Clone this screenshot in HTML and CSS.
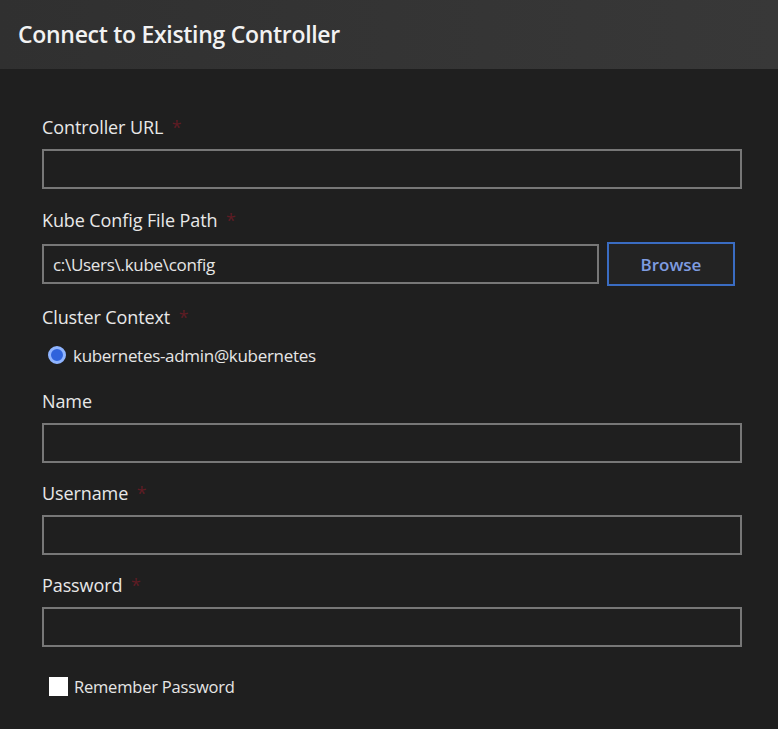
FILE: index.html
```html
<!DOCTYPE html>
<html lang="en">
<head>
<meta charset="utf-8">
<title>Connect to Existing Controller</title>
<link rel="stylesheet" href="styles.css">
</head>
<body>
<div class="dialog">
  <header class="dialog-header">
    <h1 class="dialog-title">Connect to Existing Controller</h1>
  </header>
  <main class="dialog-body">
    <div class="field">
      <label class="field-label">Controller URL <span class="req">*</span></label>
      <input class="text-input" type="text">
    </div>
    <div class="field">
      <label class="field-label">Kube Config File Path <span class="req">*</span></label>
      <div class="row">
        <input class="text-input path-input" type="text" value="c:\Users\.kube\config">
        <button class="browse-btn" type="button">Browse</button>
      </div>
    </div>
    <div class="field">
      <label class="field-label">Cluster Context <span class="req">*</span></label>
      <div class="radio-row">
        <span class="radio"></span>
        <span class="radio-text">kubernetes-admin@kubernetes</span>
      </div>
    </div>
    <div class="field">
      <label class="field-label">Name</label>
      <input class="text-input" type="text">
    </div>
    <div class="field field-tight">
      <label class="field-label">Username <span class="req">*</span></label>
      <input class="text-input" type="text">
    </div>
    <div class="field field-tight">
      <label class="field-label">Password <span class="req">*</span></label>
      <input class="text-input" type="password">
    </div>
    <div class="check-row">
      <span class="checkbox"></span>
      <span class="check-text">Remember Password</span>
    </div>
  </main>
</div>
</body>
</html>
```

FILE: styles.css
```css
html, body {
  margin: 0;
  padding: 0;
  background: #1f1f1f;
}
body {
  font-family: "Open Sans", "Noto Sans", sans-serif;
  color: #e6e6e6;
  width: 778px;
  height: 729px;
  overflow: hidden;
}
.dialog-header {
  height: 69px;
  background: linear-gradient(90deg, #303030, #383838);
  display: flex;
  align-items: center;
  padding-left: 18px;
  padding-bottom: 2px;
  box-sizing: border-box;
}
.dialog-title {
  margin: 0;
  font-size: 23px;
  font-weight: 600;
  color: #f2f2f2;
  letter-spacing: -0.3px;
}
.dialog-body {
  padding: 27px 36px 0 42px;
  display: flex;
  flex-direction: column;
}
.field {
  display: flex;
  flex-direction: column;
  margin-top: 20px;
}
.field-tight {
  margin-top: 19px;
}
.field-label {
  font-size: 18px;
  line-height: 22px;
  height: 22px;
  margin-bottom: 11px;
  color: #e8e8e8;
  letter-spacing: -0.1px;
}
.req {
  color: #5e1c24;
  margin-left: 4px;
}
.text-input {
  box-sizing: border-box;
  width: 700px;
  height: 40px;
  background: #1f1f1f;
  border: 2px solid #777777;
  color: #e6e6e6;
  font-family: inherit;
  font-size: 17px;
  padding: 0 9px;
  margin: 0;
  outline: none;
  letter-spacing: -0.3px;
}
.row {
  display: flex;
  align-items: center;
  gap: 8px;
}
.path-input { width: 557px; }
.browse-btn {
  box-sizing: border-box;
  width: 128px;
  height: 44px;
  background: #232323;
  border: 2px solid #3a6cc2;
  color: #7f9ce0;
  font-family: inherit;
  font-size: 17px;
  font-weight: 600;
  padding: 0;
}
.radio-row {
  display: flex;
  align-items: center;
  margin-top: 5px;
  margin-bottom: 4px;
  padding-left: 6px;
  height: 22px;
}
.radio {
  box-sizing: border-box;
  width: 18px;
  height: 18px;
  border-radius: 50%;
  background: #2f63dc;
  border: 3px solid #8fb4ff;
  margin-right: 7px;
}
.radio-text {
  font-size: 17px;
  letter-spacing: -0.3px;
}
.check-row {
  display: flex;
  align-items: center;
  margin-top: 28px;
  padding-left: 7px;
  height: 22px;
}
.checkbox {
  width: 19px;
  height: 19px;
  background: #ffffff;
  margin-right: 6px;
}
.check-text {
  font-size: 16.5px;
  letter-spacing: -0.2px;
}
```
